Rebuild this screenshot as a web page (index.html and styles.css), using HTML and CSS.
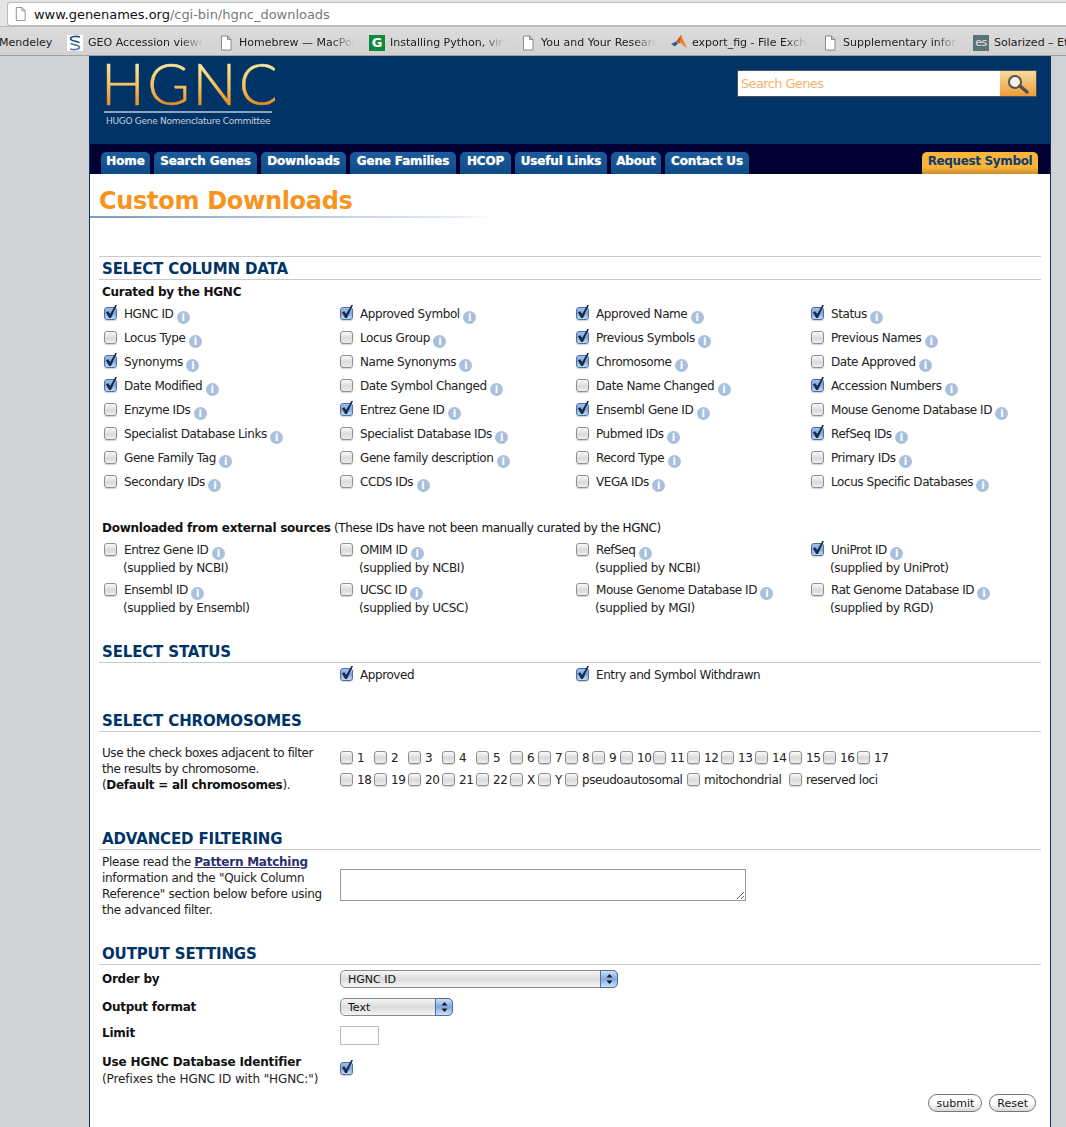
FILE: index.html
```html
<!DOCTYPE html>
<html>
<head>
<meta charset="utf-8">
<title>HGNC Custom Downloads</title>
<link rel="stylesheet" href="styles.css">
</head>
<body>

<svg class="defs" width="0" height="0">
  <symbol id="doc" viewBox="-2 0 16 15">
    <path d="M1.500 .5h6l3.500 3.500v10.500h-9.500z M7.500 .5v3.500h3.500" fill="#fff" stroke="#8a8a8a"/>
  </symbol>
</svg>

<div class="addressbar">
  <div class="omnibox">
    <svg class="addr-doc"><use href="#doc"/></svg>
    <span class="url"><b>www.genenames.org</b>/cgi-bin/hgnc_downloads</span>
  </div>
</div>
<div class="bookmarks">
  <span class="bm bm-first"><span class="bm-text">Mendeley</span></span>
  <span class="bm">
    <svg class="favicon" viewBox="0 0 16 16"><rect width="16" height="16" fill="#fff"/><path d="M13 2C8 .5 2 2 4 4.500s8 1.500 8 3.500" fill="none" stroke="#2c4f7c" stroke-width="1.800"/><path d="M3 14c5 1.500 11 0 9-2.500S4 10 4 8" fill="none" stroke="#5a7ba3" stroke-width="1.800"/></svg>
    <span class="bm-text">GEO Accession viewer</span>
  </span>
  <span class="bm">
    <svg class="favicon"><use href="#doc"/></svg>
    <span class="bm-text">Homebrew — MacPorts</span>
  </span>
  <span class="bm">
    <span class="favicon fav-g">G</span>
    <span class="bm-text">Installing Python, virtualenv</span>
  </span>
  <span class="bm">
    <svg class="favicon"><use href="#doc"/></svg>
    <span class="bm-text">You and Your Research</span>
  </span>
  <span class="bm">
    <svg class="favicon" viewBox="0 0 16 16"><path d="M0 9l5-2.500 2 2-3 3z" fill="#2a5f9e"/><path d="M5 6.500L10 0l2 6-4 2.500z" fill="#d9541e"/><path d="M10 0l6 13-3.500-2.500L9 7z" fill="#e8872c"/></svg>
    <span class="bm-text">export_fig - File Exchange</span>
  </span>
  <span class="bm">
    <svg class="favicon"><use href="#doc"/></svg>
    <span class="bm-text">Supplementary information</span>
  </span>
  <span class="bm bm-last">
    <span class="favicon fav-es">es</span>
    <span class="bm-text">Solarized – Ethan</span>
  </span>
</div>

<div class="viewport">
<div class="wrap">

  <div class="masthead">
    <div class="logo">
      <div class="logo-mark">HGNC</div>
      <div class="logo-sub">HUGO Gene Nomenclature Committee</div>
    </div>
    <form class="search">
      <input class="search-input" type="text" placeholder="Search Genes">
      <span class="search-btn">
        <svg width="26" height="20" viewBox="0 0 26 20"><circle cx="10" cy="8" r="6" fill="#f4f1e6" stroke="#55504a" stroke-width="2"/><path d="M15 12l7 6" stroke="#55504a" stroke-width="3.500" stroke-linecap="round"/></svg>
      </span>
    </form>
  </div>

  <div class="tabs">
    <a class="tab">Home</a>
    <a class="tab">Search Genes</a>
    <a class="tab">Downloads</a>
    <a class="tab">Gene Families</a>
    <a class="tab">HCOP</a>
    <a class="tab">Useful Links</a>
    <a class="tab">About</a>
    <a class="tab">Contact Us</a>
    <a class="tab tab-request">Request Symbol</a>
  </div>

  <h1 class="title">Custom Downloads</h1>

  <h2 class="head head-first">SELECT COLUMN DATA</h2>
  <div class="sub">Curated by the HGNC</div>
  <div class="cols">
    <label class="opt"><input type="checkbox" checked>HGNC ID <i class="info">i</i></label>
    <label class="opt"><input type="checkbox" checked>Approved Symbol <i class="info">i</i></label>
    <label class="opt"><input type="checkbox" checked>Approved Name <i class="info">i</i></label>
    <label class="opt"><input type="checkbox" checked>Status <i class="info">i</i></label>

    <label class="opt"><input type="checkbox">Locus Type <i class="info">i</i></label>
    <label class="opt"><input type="checkbox">Locus Group <i class="info">i</i></label>
    <label class="opt"><input type="checkbox" checked>Previous Symbols <i class="info">i</i></label>
    <label class="opt"><input type="checkbox">Previous Names <i class="info">i</i></label>

    <label class="opt"><input type="checkbox" checked>Synonyms <i class="info">i</i></label>
    <label class="opt"><input type="checkbox">Name Synonyms <i class="info">i</i></label>
    <label class="opt"><input type="checkbox" checked>Chromosome <i class="info">i</i></label>
    <label class="opt"><input type="checkbox">Date Approved <i class="info">i</i></label>

    <label class="opt"><input type="checkbox" checked>Date Modified <i class="info">i</i></label>
    <label class="opt"><input type="checkbox">Date Symbol Changed <i class="info">i</i></label>
    <label class="opt"><input type="checkbox">Date Name Changed <i class="info">i</i></label>
    <label class="opt"><input type="checkbox" checked>Accession Numbers <i class="info">i</i></label>

    <label class="opt"><input type="checkbox">Enzyme IDs <i class="info">i</i></label>
    <label class="opt"><input type="checkbox" checked>Entrez Gene ID <i class="info">i</i></label>
    <label class="opt"><input type="checkbox" checked>Ensembl Gene ID <i class="info">i</i></label>
    <label class="opt"><input type="checkbox">Mouse Genome Database ID <i class="info">i</i></label>

    <label class="opt"><input type="checkbox">Specialist Database Links <i class="info">i</i></label>
    <label class="opt"><input type="checkbox">Specialist Database IDs <i class="info">i</i></label>
    <label class="opt"><input type="checkbox">Pubmed IDs <i class="info">i</i></label>
    <label class="opt"><input type="checkbox" checked>RefSeq IDs <i class="info">i</i></label>

    <label class="opt"><input type="checkbox">Gene Family Tag <i class="info">i</i></label>
    <label class="opt"><input type="checkbox">Gene family description <i class="info">i</i></label>
    <label class="opt"><input type="checkbox">Record Type <i class="info">i</i></label>
    <label class="opt"><input type="checkbox">Primary IDs <i class="info">i</i></label>

    <label class="opt"><input type="checkbox">Secondary IDs <i class="info">i</i></label>
    <label class="opt"><input type="checkbox">CCDS IDs <i class="info">i</i></label>
    <label class="opt"><input type="checkbox">VEGA IDs <i class="info">i</i></label>
    <label class="opt"><input type="checkbox">Locus Specific Databases <i class="info">i</i></label>
  </div>

  <div class="sub sub-external"><b>Downloaded from external sources</b> (These IDs have not been manually curated by the HGNC)</div>
  <div class="cols cols-external">
    <label class="opt"><input type="checkbox">Entrez Gene ID <i class="info">i</i><span class="supplied">(supplied by NCBI)</span></label>
    <label class="opt"><input type="checkbox">OMIM ID <i class="info">i</i><span class="supplied">(supplied by NCBI)</span></label>
    <label class="opt"><input type="checkbox">RefSeq <i class="info">i</i><span class="supplied">(supplied by NCBI)</span></label>
    <label class="opt"><input type="checkbox" checked>UniProt ID <i class="info">i</i><span class="supplied">(supplied by UniProt)</span></label>

    <label class="opt"><input type="checkbox">Ensembl ID <i class="info">i</i><span class="supplied">(supplied by Ensembl)</span></label>
    <label class="opt"><input type="checkbox">UCSC ID <i class="info">i</i><span class="supplied">(supplied by UCSC)</span></label>
    <label class="opt"><input type="checkbox">Mouse Genome Database ID <i class="info">i</i><span class="supplied">(supplied by MGI)</span></label>
    <label class="opt"><input type="checkbox">Rat Genome Database ID <i class="info">i</i><span class="supplied">(supplied by RGD)</span></label>
  </div>

  <h2 class="head head-status">SELECT STATUS</h2>
  <div class="cols cols-status">
    <span></span>
    <label class="opt"><input type="checkbox" checked>Approved</label>
    <label class="opt"><input type="checkbox" checked>Entry and Symbol Withdrawn</label>
  </div>

  <h2 class="head head-chrom">SELECT CHROMOSOMES</h2>
  <div class="split">
    <p class="note note-chrom">Use the check boxes adjacent to filter the results by chromosome.<br>(<b>Default = all chromosomes</b>).</p>
    <div class="chroms">
      <label class="chr"><input type="checkbox">1</label>
      <label class="chr"><input type="checkbox">2</label>
      <label class="chr"><input type="checkbox">3</label>
      <label class="chr"><input type="checkbox">4</label>
      <label class="chr"><input type="checkbox">5</label>
      <label class="chr"><input type="checkbox">6</label>
      <label class="chr"><input type="checkbox">7</label>
      <label class="chr"><input type="checkbox">8</label>
      <label class="chr"><input type="checkbox">9</label>
      <label class="chr"><input type="checkbox">10</label>
      <label class="chr"><input type="checkbox">11</label>
      <label class="chr"><input type="checkbox">12</label>
      <label class="chr"><input type="checkbox">13</label>
      <label class="chr"><input type="checkbox">14</label>
      <label class="chr"><input type="checkbox">15</label>
      <label class="chr"><input type="checkbox">16</label>
      <label class="chr"><input type="checkbox">17</label>

      <label class="chr"><input type="checkbox">18</label>
      <label class="chr"><input type="checkbox">19</label>
      <label class="chr"><input type="checkbox">20</label>
      <label class="chr"><input type="checkbox">21</label>
      <label class="chr"><input type="checkbox">22</label>
      <label class="chr"><input type="checkbox">X</label>
      <label class="chr"><input type="checkbox">Y</label>
      <label class="chr span-pseudo"><input type="checkbox">pseudoautosomal</label>
      <label class="chr span-mito"><input type="checkbox">mitochondrial</label>
      <label class="chr span-rest"><input type="checkbox">reserved loci</label>
    </div>
  </div>

  <h2 class="head head-adv">ADVANCED FILTERING</h2>
  <div class="split">
    <p class="note note-adv">Please read the <a class="link">Pattern Matching</a> information and the "Quick Column Reference" section below before using the advanced filter.</p>
    <textarea class="filter"></textarea>
  </div>

  <h2 class="head head-output">OUTPUT SETTINGS</h2>
  <div class="settings">
    <div class="split setting">
      <b>Order by</b>
      <div class="sel sel-wide">
        <select><option>HGNC ID</option></select>
        <span class="sel-arrows"><svg width="7" height="12" viewBox="0 0 7 12"><path d="M3.500 1l3 3.500h-6zM3.500 11l3-3.500h-6z" fill="#1a1a1a"/></svg></span>
      </div>
    </div>
    <div class="split setting">
      <b>Output format</b>
      <div class="sel sel-small">
        <select><option>Text</option></select>
        <span class="sel-arrows"><svg width="7" height="12" viewBox="0 0 7 12"><path d="M3.500 1l3 3.500h-6zM3.500 11l3-3.500h-6z" fill="#1a1a1a"/></svg></span>
      </div>
    </div>
    <div class="split setting setting-limit">
      <b>Limit</b>
      <input class="limit" type="text">
    </div>
    <div class="split setting setting-prefix">
      <div class="prefix-text"><b>Use HGNC Database Identifier</b><br>(Prefixes the HGNC ID with "HGNC:")</div>
      <input type="checkbox" checked>
    </div>
  </div>
  <div class="actions">
    <button class="pill" type="button">submit</button>
    <button class="pill" type="button">Reset</button>
  </div>

</div>
</div>
</body>
</html>
```

FILE: styles.css
```css
html, body { margin:0; padding:0; height:1127px; overflow:hidden; }
body { font-family:"DejaVu Sans", Verdana, sans-serif; font-size:12px; letter-spacing:-.42px; color:#222; background:#d1d2d4; }

.defs { position:absolute; }

/* browser chrome */
.addressbar { height:27px; box-sizing:border-box; padding:2px 0 0 7px; background:#e4e4e4; border-bottom:1px solid #bdbdbd; }
.omnibox { height:24px; box-sizing:border-box; display:flex; align-items:center; background:#fff; border:1px solid #bbb; border-right:none; border-radius:3px 0 0 3px; padding-left:5px; }
.addr-doc { width:15px; height:14px; margin-right:6px; }
.url { font-size:13px; color:#777; letter-spacing:-.03px; }
.url b { font-weight:normal; color:#111; }

.bookmarks { height:29px; box-sizing:border-box; display:flex; align-items:center; overflow:hidden; padding-top:3px; background:linear-gradient(#dcdcdc,#d2d2d2); border-bottom:1px solid #a2a2a2; white-space:nowrap; font-size:11px; color:#222; letter-spacing:0; }
.bm { flex:none; display:flex; align-items:center; margin-right:15px; }
.bm-first { width:67px; margin-right:0; }
.bm-first .bm-text { width:auto; margin-left:-1px; -webkit-mask-image:none; mask-image:none; }
.bm-text { display:block; width:115px; overflow:hidden; -webkit-mask-image:linear-gradient(90deg,#000 80%,transparent); mask-image:linear-gradient(90deg,#000 80%,transparent); }
.bm-last .bm-text { -webkit-mask-image:none; mask-image:none; width:72px; }
.favicon { width:16px; height:16px; flex:none; margin-right:5px; }
.fav-g { background:#0f8a3c; color:#fff; font-weight:bold; font-size:13px; line-height:16px; text-align:center; }
.fav-es { background:#5b7378; color:#e8e6d8; font-size:11px; line-height:16px; text-align:center; letter-spacing:-.5px; }

/* page */
.viewport { height:1071px; overflow:hidden; padding-left:89px; }
.wrap { width:960px; height:1071px; background:#fff; border-left:1px solid #003366; border-right:1px solid #003366; }

.masthead { height:88px; background:#003366; display:flex; justify-content:space-between; box-sizing:border-box; padding:0 13px 0 15px; }
.logo { width:170px; }
.logo-mark { height:55px; margin-left:-4px; font-family:"Lato", sans-serif; font-weight:300; font-size:58px; line-height:54px; letter-spacing:2.5px; -webkit-text-stroke:.5px transparent; background:linear-gradient(#f8e7a0 14%,#f3c25c 55%,#e8922a 85%); -webkit-background-clip:text; background-clip:text; color:transparent; }
.logo-sub { border-top:2px solid #8fa3bf; margin:0 3px 0 -1px; padding:3px 0 0 2px; font-size:9px; letter-spacing:-.28px; color:#c6d0de; white-space:nowrap; }
.search { display:flex; margin-top:14px; height:27px; box-sizing:border-box; border:1px solid #4a4f5a; background:#fff; width:300px; }
.search-input { flex:1; min-width:0; border:0; outline:0; padding:0 3px; font:13px "DejaVu Sans", sans-serif; letter-spacing:-.63px; }
.search-input::placeholder { color:#f5b26b; opacity:1; }
.search-btn { width:36px; display:flex; align-items:center; justify-content:center; background:linear-gradient(#f6dc9c,#ef9c3a); }

.tabs { height:30px; box-sizing:border-box; background:#000033; padding:8px 12px 0 11px; display:grid; grid-template-columns:49px 103px 85px 106px 51px 92px 50px 84px 1fr 116px; gap:4px; }
.tab { height:22px; line-height:19px; text-align:center; white-space:nowrap; font-weight:bold; font-size:12px; letter-spacing:-.15px; color:#fff; text-shadow:0 0 1px rgba(255,255,255,.7); background:linear-gradient(#1b5c9c,#0f4a88); border-radius:5px 5px 0 0; }
.tab-request { grid-column:10; letter-spacing:-.35px; color:#0e3a70; text-shadow:none; background:linear-gradient(#f9b53a 70%,#c98a2c); }

.title { margin:0 0 38px 0; height:44px; box-sizing:border-box; padding:11px 0 0 9px; font-size:24px; line-height:33px; font-weight:bold; letter-spacing:-.3px; color:#f7941e; background:linear-gradient(90deg,#7f9ab8,#e6ecf3 92%,transparent) no-repeat 0 42px / 400px 2px; }

.head { margin:0 9px 1px 9px; padding-left:3px; height:22px; box-sizing:border-box; border-bottom:1px solid #c9c9c9; font-size:15px; line-height:22px; font-weight:bold; letter-spacing:-.15px; color:#003366; }
.head-first { border-top:1px solid #c9c9c9; height:24px; line-height:24px; }
.head-status { margin-top:24px; }
.head-chrom { margin-top:22px; }
.head-adv { margin-top:35px; }
.head-output { margin-top:25px; }

.sub { margin:2px 0 0 12px; height:20px; line-height:20px; white-space:nowrap; }
.sub, .sub b, .settings b, .note b { font-weight:bold; color:#111; letter-spacing:-.25px; }
.sub-external { margin-top:24px; font-weight:normal; letter-spacing:-.42px; }

.cols { display:grid; grid-template-columns:236px 236px 235px 1fr; margin-left:14px; }
.cols .opt { height:24px; line-height:24px; white-space:nowrap; display:block; }
.cols-external { margin-top:3px; row-gap:4px; }
.cols-external .opt { height:36px; line-height:18px; }
.supplied { display:block; margin:-1px 0 0 19px; letter-spacing:-.35px; }
.cols-status .opt { line-height:23px; }

input[type=checkbox] { -webkit-appearance:none; appearance:none; position:relative; box-sizing:border-box; width:13px; height:13px; margin:0 7px 0 0; vertical-align:-2px; border:1px solid #8e8e8e; border-radius:3px; background:linear-gradient(#fbfbfb,#d9d9d9 55%,#efefef); box-shadow:0 1px 1px rgba(0,0,0,.18); }
input[type=checkbox]:checked { border-color:#4f6f9f; background:linear-gradient(#9fc0ea,#7ea6dc 50%,#c3d9f4); }
input[type=checkbox]:checked::before { content:""; position:absolute; left:1px; top:-3px; width:11px; height:13px; background:#1c2b48; clip-path:polygon(0 55%,20% 48%,38% 70%,85% 0,100% 0,45% 100%,28% 100%); }

.info { display:inline-block; width:13px; height:13px; vertical-align:-3px; border-radius:50%; background:#a9bfde; color:#fff; font:bold 10px/13px "DejaVu Sans", sans-serif; letter-spacing:0; text-align:center; }

.split { display:grid; grid-template-columns:238px 1fr; margin-left:12px; }
.note { margin:0; line-height:16px; width:232px; color:#222; }
.note-chrom { margin-top:12px; }
.note-adv { margin-top:3px; height:64px; letter-spacing:-.3px; }
.link { font-weight:bold; letter-spacing:-.25px; color:#2b2f6e; text-decoration:underline; }

.chroms { display:grid; margin-top:14px; grid-template-columns:34px 34px 34px 34px 34px 28px 27px 27px 28px 33px 34px 34px 34px 34px 34px 34px 1fr; grid-auto-rows:22px; }
.chr { display:block; line-height:22px; white-space:nowrap; }
.chr input { margin-right:4px; }
.span-pseudo { grid-column:span 4; }
.span-mito { grid-column:span 3; }
.span-rest { grid-column:span 3; }

.filter { box-sizing:border-box; width:406px; height:32px; margin-top:18px; border:1px solid #999; padding:2px; background:#fff; }

.settings { margin-top:5px; }
.setting { align-items:center; margin-bottom:10px; }
.sel { position:relative; height:18px; }
.sel select { -webkit-appearance:none; appearance:none; display:block; width:100%; height:18px; box-sizing:border-box; padding:0 0 0 7px; border:1px solid #8a8a8a; border-radius:5px; font:11px "DejaVu Sans", sans-serif; color:#111; background:linear-gradient(#f6f6f6,#dcdcdc 50%,#f4f4f4); }
.sel-wide { width:278px; }
.sel-small { width:113px; }
.sel-arrows { position:absolute; right:0; top:0; width:18px; height:18px; box-sizing:border-box; display:flex; align-items:center; justify-content:center; border:1px solid #4f6f9f; border-radius:0 5px 5px 0; background:linear-gradient(#cfe0f6,#7ea8e0 50%,#cfe2f8); }
.setting-limit { margin-bottom:8px; }
.setting-limit b { margin-bottom:5px; }
.limit { box-sizing:border-box; width:39px; height:19px; border:1px solid #bbb; padding:0; }
.setting-prefix { align-items:start; line-height:17px; margin-bottom:6px; }
.setting-prefix input { margin-top:9px; }
.prefix-text { margin-top:1px; letter-spacing:-.1px; white-space:nowrap; }
.prefix-text b { letter-spacing:-.15px; }

.actions { display:flex; justify-content:flex-end; gap:7px; padding-right:14px; }
.pill { height:18px; box-sizing:border-box; padding:0 7px; border:1px solid #777; border-radius:9px; font:11px "DejaVu Sans", sans-serif; color:#111; background:linear-gradient(#fff 50%,#d8d8d8); }
```
